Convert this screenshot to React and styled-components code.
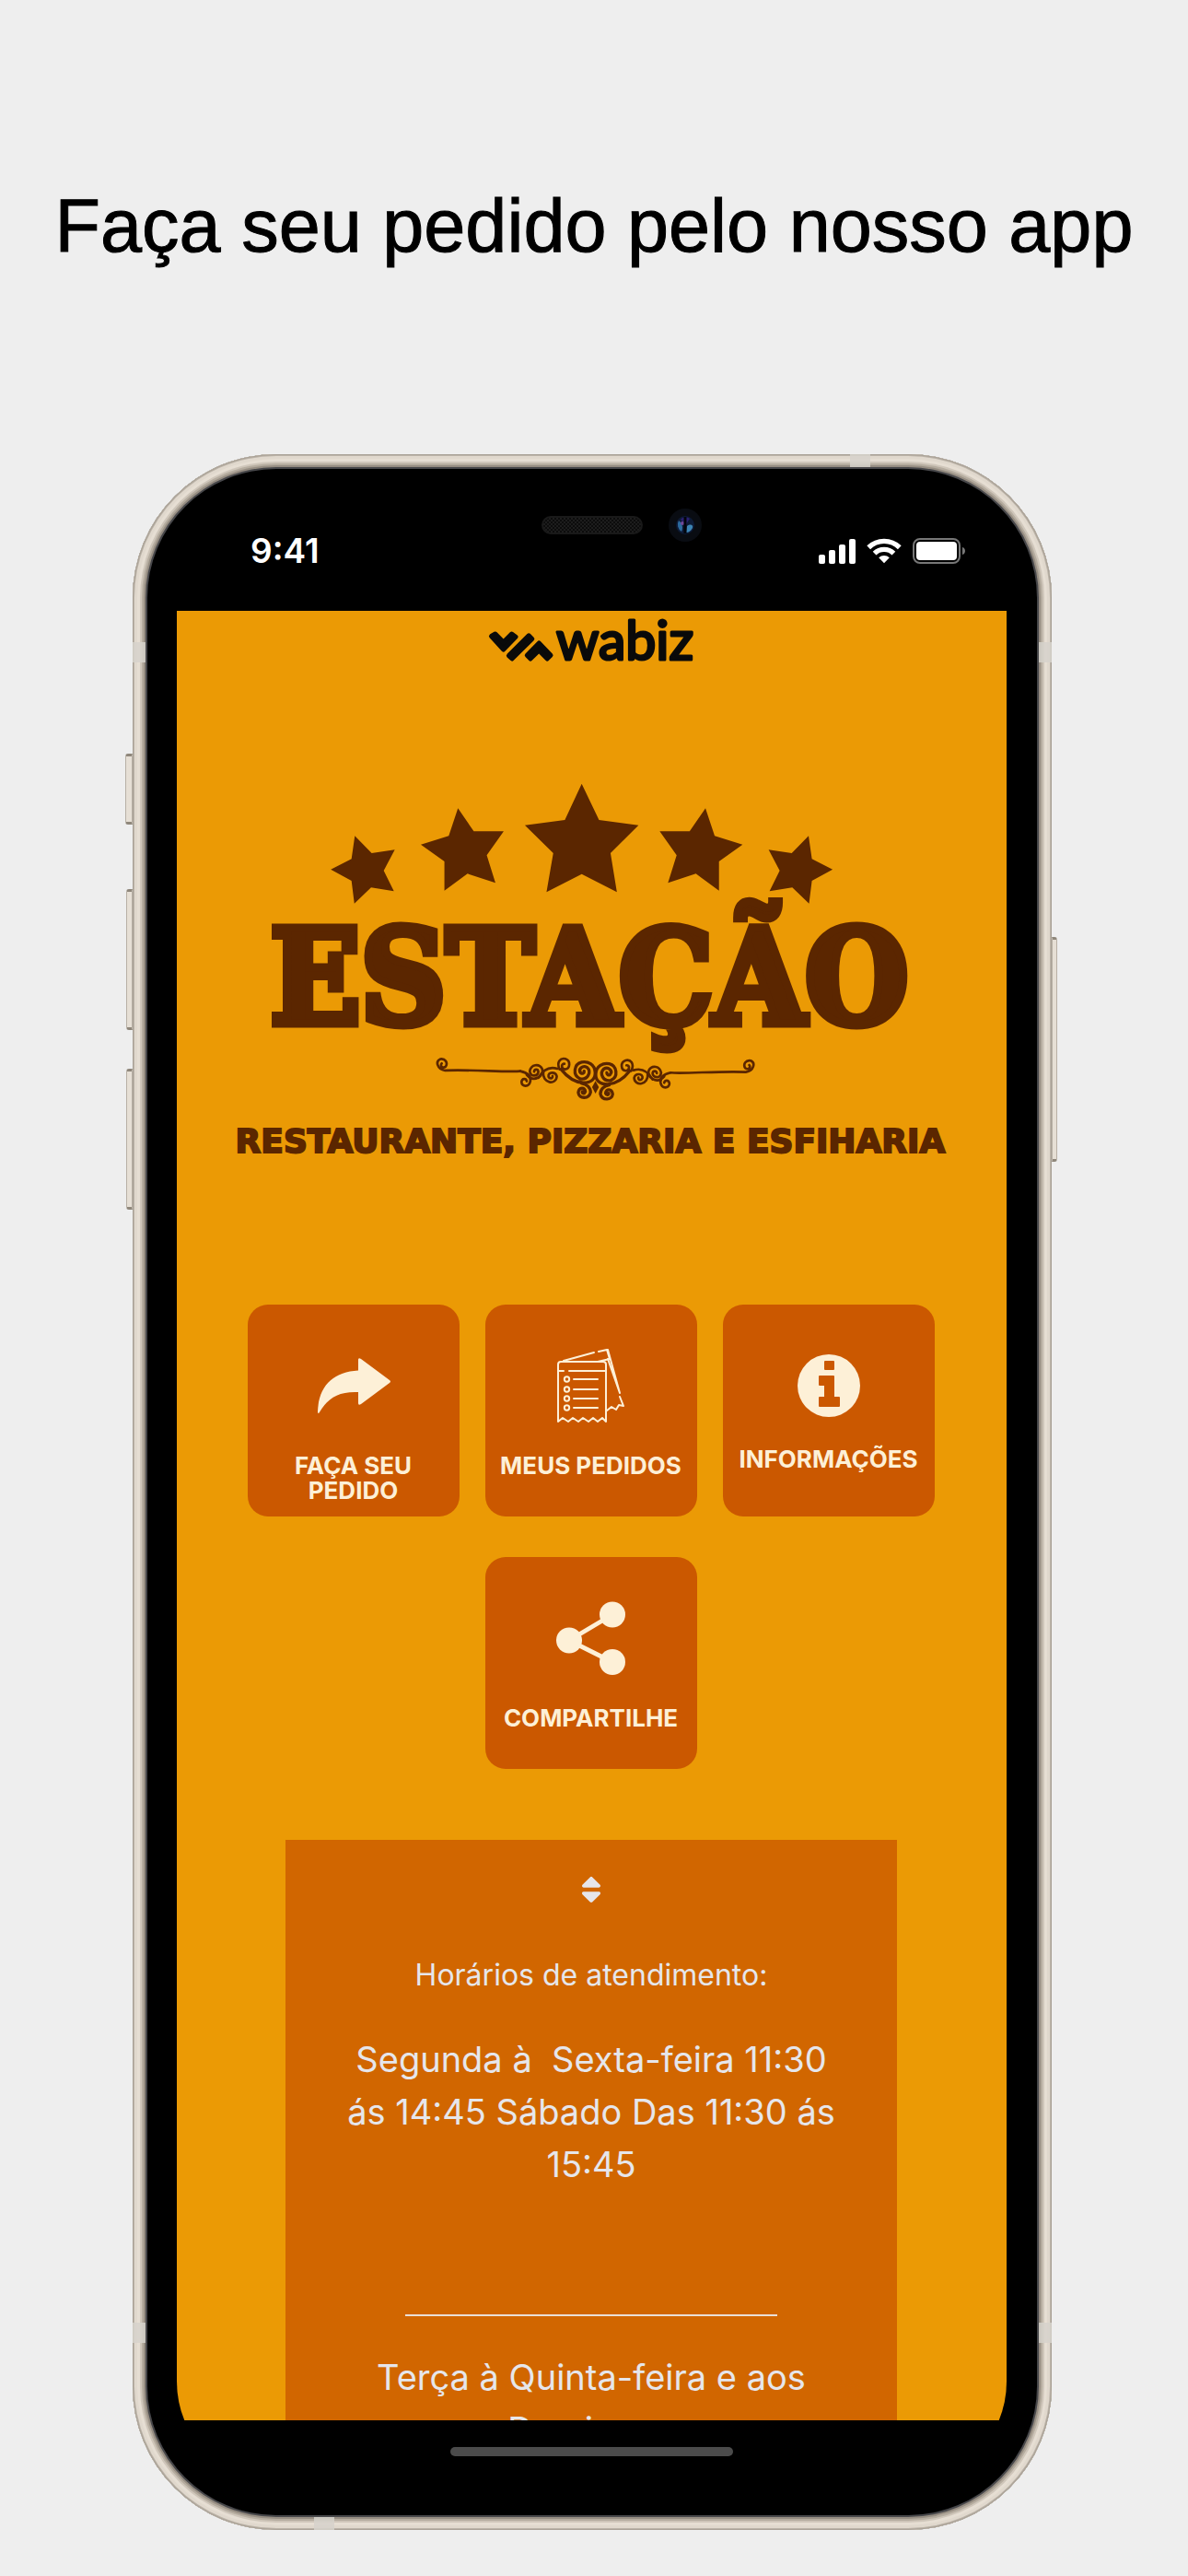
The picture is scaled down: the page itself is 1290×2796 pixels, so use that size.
import React from "react";
import styled, { createGlobalStyle } from "styled-components";
import { FaSort } from "react-icons/fa";

const color = {
  page: "#eeeeee",
  amber: "#eb9a05",
  tile: "#cb5800",
  card: "#d16600",
  cream: "#fdf0d7",
  pale: "#e6e6eb",
  brown: "#5b2600",
};

const GlobalStyle = createGlobalStyle`
  *, *::before, *::after { box-sizing: border-box; }
  body {
    margin: 0;
    background: ${color.page};
    font-family: Inter, "Open Sans", sans-serif;
  }
`;

const Page = styled.main`
  display: flex;
  flex-direction: column;
  min-height: 100vh;
  padding-bottom: 50px;
  background: ${color.page};
`;

const Headline = styled.h1`
  margin: 0;
  padding: 195px 24px 198px;
  color: #000;
  font: 400 81px/100px "Liberation Sans", Arial, sans-serif;
  text-align: center;
  -webkit-text-stroke: 1px #000;
`;

/* Phone body */

const Phone = styled.section`
  position: relative;
  margin: 0 148px 0 144px;
  padding: 0 49px 49px 48px;
  border-radius: 156px;
  background: #000;
  box-shadow:
    inset 0 0 0 1px #a9a196,
    inset 0 0 0 2px #bcb4a9,
    inset 0 0 0 5px #e0d8cd,
    inset 0 0 0 8px #e6ded3,
    inset 0 0 0 10px #cfc6ba,
    inset 0 0 0 12px #b5ac9f,
    inset 0 0 0 14px #968d82,
    inset 0 0 0 16px #47474a;
`;

const SideButton = styled.span`
  position: absolute;
  top: ${(p) => p.$top}px;
  ${(p) => p.$side}: -${(p) => p.$depth}px;
  width: ${(p) => p.$depth}px;
  height: ${(p) => p.$length}px;
  border: 1px solid #b3aa9e;
  border-width: 3px 1px;
  border-color: #8f877b #b8b0a5;
  border-radius: ${(p) => (p.$side === "left" ? "3px 0 0 3px" : "0 3px 3px 0")};
  background: #e6dfd5;
`;

const Antenna = styled.span`
  position: absolute;
  background: #d6d2cb;
  opacity: 0.85;
  ${(p) => p.$edge}: 0;
  ${(p) => p.$from}: ${(p) => p.$at}px;
  width: ${(p) => (p.$from === "top" ? 14 : 22)}px;
  height: ${(p) => (p.$from === "top" ? 22 : 14)}px;
`;

const StatusBar = styled.header`
  display: grid;
  grid-template-columns: 1fr 110px 1fr;
  height: 170px;
  padding-top: 59px;
`;

const Clock = styled.time`
  padding: 24px 0 0 80px;
  color: #fff;
  font-size: 37px;
  font-weight: 600;
  line-height: 44px;
`;

const Speaker = styled.span`
  height: 20px;
  margin-top: 8px;
  border: 2px solid #191919;
  border-radius: 10px;
  background: repeating-conic-gradient(#1d1d1d 0 25%, #0c0c0c 0 50%) 0 0 / 4px 4px;
`;

const StatusRight = styled.div`
  display: flex;
  align-items: flex-start;
  justify-content: space-between;
  padding: 0 44px 0 28px;
`;

const Indicators = styled.div`
  display: flex;
  align-items: center;
  gap: 12px;
  margin-top: 32px;
`;

/* App shown on the phone */

const Display = styled.div`
  overflow: hidden;
  border-radius: 0 0 112px 112px;
`;

const AppView = styled.div`
  display: flex;
  flex-direction: column;
  align-items: center;
  aspect-ratio: 901 / 1964;
  overflow: hidden;
  background: ${color.amber};
`;

const HomeArea = styled.footer`
  display: flex;
  justify-content: center;
  height: 70px;
  padding-top: 29px;
  background: #000;
`;

const HomeIndicator = styled.span`
  width: 34%;
  height: 10px;
  border-radius: 5px;
  background: #4b4b4b;
`;

const WabizLogo = styled.svg`
  flex: none;
  width: 228px;
  margin-top: 5px;
  overflow: visible;
`;

const StoreLogo = styled.svg`
  flex: none;
  width: 90%;
  margin-top: 116px;
`;

const Menu = styled.nav`
  display: flex;
  flex-wrap: wrap;
  justify-content: center;
  gap: 44px 28px;
  margin-top: 146px;
  padding: 0 62px 0 60px;
`;

const Tile = styled.button`
  display: flex;
  flex-direction: column;
  align-items: center;
  gap: ${(p) => (p.$compact ? 26 : 33)}px;
  width: 230px;
  height: 230px;
  padding: 48px 10px 0;
  border: 0;
  border-radius: 22px;
  background: ${color.tile};
  color: ${color.cream};
  font: 700 26px/27px Inter, sans-serif;
  text-align: center;
  cursor: pointer;
`;

const TileIcon = styled.span`
  display: grid;
  flex: none;
  place-items: center;
  width: 80px;
  height: 80px;
`;

const HoursCard = styled.section`
  display: flex;
  flex: none;
  flex-direction: column;
  align-items: center;
  align-self: stretch;
  margin: 77px 119px 0 118px;
  padding: 36px 60px;
  background: ${color.card};
  color: ${color.pale};
  text-align: center;
`;

const HoursTitle = styled.h2`
  margin: 0;
  padding-top: 53px;
  font: 400 32px/44px Inter, sans-serif;
`;

const HoursText = styled.p`
  margin: 0;
  font: 400 38px/57px Inter, sans-serif;
  white-space: pre-wrap;
`;

const Hours = styled.div`
  padding-top: ${(p) => p.$space}px;
`;

const Divider = styled.hr`
  width: 404px;
  max-width: 100%;
  height: 2px;
  margin: 134px 0 0;
  border: 0;
  background: #eadfd6;
`;

function Camera() {
  return (
    <svg width="36" height="36" viewBox="0 0 36 36" aria-hidden="true">
      <circle cx="18" cy="18" r="18" fill="#090c12" />
      <circle cx="18" cy="18" r="10" fill="#0d1a35" />
      <path d="M11 13a9 9 0 0 0 3 12c2-4 1-9-3-12z" fill="#2c6a9e" />
      <path d="M20 19c4-3 7-1 6 2-2 4-5 5-7 5z" fill="#3c84b4" />
      <path d="M13 12c3-4 7-3 10-1-2 2-3 5-4 7-2-2-4-4-6-6z" fill="#2a2070" />
      <circle cx="15" cy="16" r="2" fill="#71499a" />
      <path d="M18 9v18" stroke="#02050c" strokeWidth="3" />
    </svg>
  );
}

function Signal() {
  return (
    <svg width="40" height="28" viewBox="0 0 40 28" fill="#fff" aria-hidden="true">
      <rect x="0" y="18" width="7" height="10" rx="2" />
      <rect x="11" y="13" width="7" height="15" rx="2" />
      <rect x="22" y="7" width="7" height="21" rx="2" />
      <rect x="33" y="1" width="7" height="27" rx="2" />
    </svg>
  );
}

function Wifi() {
  return (
    <svg width="38" height="28" viewBox="0 0 38 28" aria-hidden="true">
      <g fill="none" stroke="#fff" strokeWidth="5.4">
        <path d="M2.2 10.2A24.2 24.2 0 0 1 35.8 10.2" />
        <path d="M8.6 16.6A15 15 0 0 1 29.4 16.6" />
      </g>
      <path d="M13.2 21.2A8.4 8.4 0 0 1 24.8 21.2L19 27.2z" fill="#fff" />
    </svg>
  );
}

function Battery() {
  return (
    <svg width="58" height="28" viewBox="0 0 58 28" aria-hidden="true">
      <rect x="1" y="1" width="50" height="26" rx="7" fill="none" stroke="#777" strokeWidth="2" />
      <rect x="4" y="4" width="44" height="20" rx="4" fill="#fff" />
      <path d="M54 10c4 1 4 7 0 8z" fill="#777" />
    </svg>
  );
}

function Wabiz() {
  return (
    <WabizLogo viewBox="528 668 228 56" role="img" aria-label="wabiz">
      <g stroke="#0a0a0a" strokeWidth="5" strokeLinejoin="round" fill="#0a0a0a">
        <path d="M532.5 690.5L536.8 688L545.7 697L554.6 688L559 691.2L545.7 705z" />
        <path d="M573.2 689.8L576.8 693.4L555 715L551.4 711.6z" />
        <path d="M584.3 698L597 711.2L593.2 715L584.3 706L575 715L571.3 711.2z" />
      </g>
      <text
        x="603"
        y="716"
        fontFamily="Lato, sans-serif"
        fontSize="59"
        fontWeight="400"
        fill="#0a0a0a"
        stroke="#0a0a0a"
        strokeWidth="3"
        strokeLinejoin="round"
      >
        wabiz
      </text>
    </WabizLogo>
  );
}

const sideStars =
  "M497.3 877.3L514.5 902.3L547 902.3L528.6 928.3L538 958.3L507.7 948.3L482.6 966.7L482.6 935L457 916.7L487.3 907.3z" +
  "M385.3 907.3L403.6 926L428.7 922.3L416.7 945L427.7 967.3L403 963.3L384.8 980.7L381.7 956L359.2 943.7L381.7 932.3z";

function Scroll() {
  return (
    <g fill="none" stroke={color.brown} strokeLinecap="round">
      <g strokeWidth="8">
        <path d="M345 128C300 132 180 122 100 126C74 122 68 96 84 89C100 86 110 100 102 113C93 120 82 112 89 103" />
        <path d="M345 128C365 132 380 142 378 160C374 182 349 180 349 163C351 151 364 151 366 161" />
        <path d="M366 140C390 168 425 142 416 120C406 102 380 106 376 128C378 148 402 146 404 130C402 119 391 122 390 130" />
        <path d="M420 132C416 168 462 175 464 145C460 128 434 130 437 146C441 155 452 152 450 144" />
        <path d="M404 150C420 122 440 112 466 120" />
        <path d="M473 122C462 98 476 84 492 88C510 94 508 120 491 122C477 120 478 103 489 104" />
      </g>
      <g strokeWidth="10">
        <path d="M478 122C500 150 520 164 550 166C578 166 590 152 589 132C588 106 565 95 545 99C520 105 514 142 540 153C565 158 578 130 563 116C548 107 532 122 542 134C548 138 554 134 553 128" />
        <path d="M545 168C562 170 574 182 574 197C568 221 536 218 534 198C536 180 556 179 557 195C554 203 546 201 547 195" />
      </g>
    </g>
  );
}

function Store() {
  return (
    <StoreLogo viewBox="237 840 811 430" role="img" aria-label="Estação">
      <g fill={color.brown}>
        <path d="M631.7 850.7L650.5 890L693.4 895.7L663 926L669.9 968.3L631.7 948.7L593.5 968.3L600.8 926L570 895.7L613.4 890z" />
        <path d={sideStars} />
        <path d={sideStars} transform="translate(1263.4 0) scale(-1 1)" />
        <text
          x="640"
          y="1111"
          textAnchor="middle"
          fontFamily="'DejaVu Serif Condensed', 'DejaVu Serif', serif"
          fontSize="143"
          fontWeight="700"
          stroke={color.brown}
          strokeWidth="9"
        >
          ESTAÇÃO
        </text>
        <text
          x="641"
          y="1251"
          textAnchor="middle"
          fontFamily="'DejaVu Sans', sans-serif"
          fontSize="36"
          fontWeight="700"
          stroke={color.brown}
          strokeWidth="2"
        >
          RESTAURANTE, PIZZARIA E ESFIHARIA
        </text>
      </g>
      <g transform="translate(450 1120) scale(0.3333)">
        <Scroll />
        <g transform="translate(1180 5) scale(-1 1)">
          <Scroll />
        </g>
        <path d="M590 160L601 180L590 201L579 180z" fill={color.brown} />
      </g>
    </StoreLogo>
  );
}

function ArrowIcon() {
  return (
    <svg width="80" height="80" viewBox="0 0 80 80" fill="currentColor" aria-hidden="true">
      <path d="M45 12q0-3 3-1L79 34q2 1.500 0 3L48 60q-3 2-3-1V47C24 46 12 53 2.500 69.500Q1 71 1 68C2 40 18 25 45 23.500z" />
    </svg>
  );
}

function OrdersIcon() {
  return (
    <svg
      width="80"
      height="80"
      viewBox="0 0 80 80"
      fill="none"
      stroke="currentColor"
      strokeWidth="2"
      strokeLinecap="round"
      strokeLinejoin="round"
      aria-hidden="true"
    >
      <path d="M4 79V17q0-3 3-3H53q3 0 3 3V79L52 75L47 79L42 75L37 79L31 75L26 79L20 75L15 79L9 75z" />
      <path d="M4 24H10M16 24H56M10 13L43 4M48 3L57 1L60 11L47 14M58 11L71 48M71 52L75 62L70 61L67 66L62 63L57 67M58 1L71 48" />
      {[33, 44, 54, 64].map((y) => (
        <g key={y}>
          <circle cx="13.500" cy={y} r="2.700" />
          <path d={`M21 ${y}H47`} />
        </g>
      ))}
    </svg>
  );
}

function InfoIcon() {
  return (
    <svg width="68" height="68" viewBox="0 0 68 68" aria-hidden="true">
      <circle cx="34" cy="34" r="34" fill="currentColor" />
      <g fill={color.tile} stroke={color.tile} strokeWidth="2" strokeLinejoin="round">
        <path d="M30 8H39V16H30z" />
        <path d="M24 24H39V47H45V56H24V47H30V33H24z" />
      </g>
    </svg>
  );
}

function ShareIcon() {
  return (
    <svg width="80" height="80" viewBox="0 0 80 80" fill="currentColor" aria-hidden="true">
      <path d="M63 14.500L16 42.500L63 66" fill="none" stroke="currentColor" strokeWidth="4.800" />
      <circle cx="63" cy="14.500" r="14" />
      <circle cx="16" cy="42.500" r="14" />
      <circle cx="63" cy="66" r="14" />
    </svg>
  );
}

const menu = [
  { label: "FAÇA SEU PEDIDO", icon: <ArrowIcon /> },
  { label: "MEUS PEDIDOS", icon: <OrdersIcon /> },
  { label: "INFORMAÇÕES", icon: <InfoIcon />, compact: true },
  { label: "COMPARTILHE", icon: <ShareIcon /> },
];

export default function App() {
  return (
    <Page>
      <GlobalStyle />
      <Headline>Faça seu pedido pelo nosso app</Headline>
      <Phone>
        <SideButton $side="left" $top={325} $depth={8} $length={77} />
        <SideButton $side="left" $top={472} $depth={7} $length={153} />
        <SideButton $side="left" $top={667} $depth={7} $length={153} />
        <SideButton $side="right" $top={524} $depth={6} $length={244} />
        <Antenna $edge="top" $from="right" $at={197} />
        <Antenna $edge="bottom" $from="left" $at={197} />
        <Antenna $edge="left" $from="top" $at={204} />
        <Antenna $edge="right" $from="top" $at={204} />
        <Antenna $edge="left" $from="top" $at={2028} />
        <Antenna $edge="right" $from="top" $at={2028} />

        <StatusBar>
          <Clock>9:41</Clock>
          <Speaker />
          <StatusRight>
            <Camera />
            <Indicators>
              <Signal />
              <Wifi />
              <Battery />
            </Indicators>
          </StatusRight>
        </StatusBar>

        <Display>
          <AppView>
            <Wabiz />
            <Store />
            <Menu>
              {menu.map((item) => (
                <Tile key={item.label} type="button" $compact={item.compact}>
                  <TileIcon>{item.icon}</TileIcon>
                  {item.label}
                </Tile>
              ))}
            </Menu>
            <HoursCard>
              <FaSort size={36} aria-hidden="true" />
              <HoursTitle>Horários de atendimento:</HoursTitle>
              <Hours $space={41}>
                <HoursText>{"Segunda à  Sexta-feira 11:30 ás 14:45 Sábado Das 11:30 ás 15:45"}</HoursText>
              </Hours>
              <Divider />
              <Hours $space={38}>
                <HoursText>Terça à Quinta-feira e aos Domingos</HoursText>
              </Hours>
            </HoursCard>
          </AppView>
          <HomeArea>
            <HomeIndicator />
          </HomeArea>
        </Display>
      </Phone>
    </Page>
  );
}
